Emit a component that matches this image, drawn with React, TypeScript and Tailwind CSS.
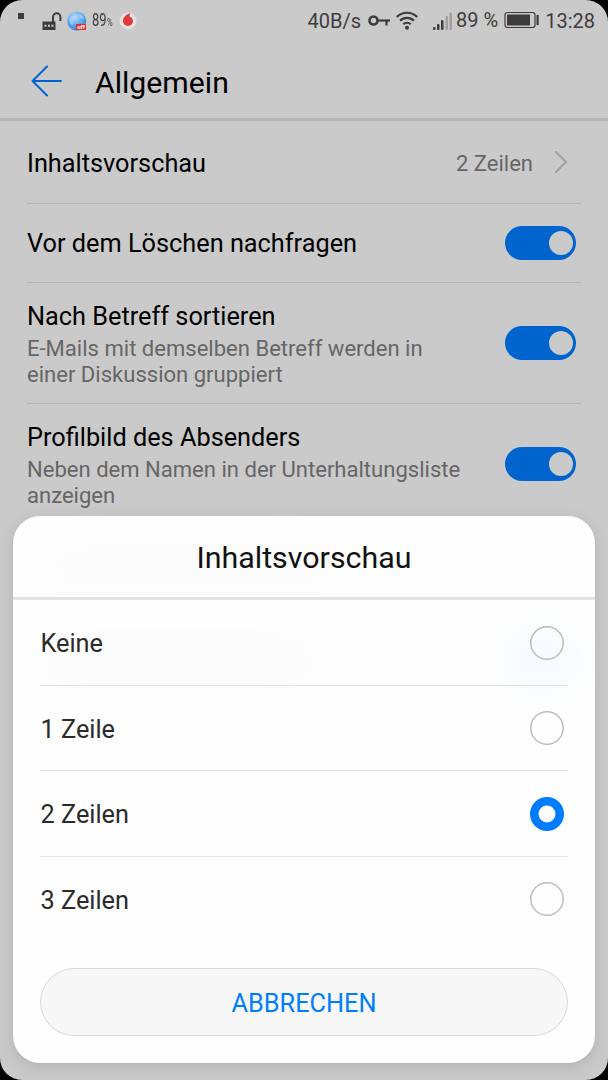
import { useState } from "react";

const options = ["Keine", "1 Zeile", "2 Zeilen", "3 Zeilen"];

const settings = [
  { title: "Vor dem Löschen nachfragen", height: "h-[79px]" },
  {
    title: "Nach Betreff sortieren",
    text: "E-Mails mit demselben Betreff werden in einer Diskussion gruppiert",
    height: "h-[121px]",
  },
  {
    title: "Profilbild des Absenders",
    text: "Neben dem Namen in der Unterhaltungsliste anzeigen",
    height: "h-[121px]",
  },
];

function StatusBar() {
  return (
    <div className="flex h-[41px] items-center justify-between pr-[13px] pl-[18px] text-[#3c3c3c]">
      <div className="flex items-center">
        <div className="mb-[9px] h-[6px] w-[6px] bg-[#3c3c3c]" />
        <svg className="ml-[17px]" width="22" height="20" viewBox="0 0 22 20" fill="none">
          <path d="M12 11V6a3.700 3.700 0 0 1 7.400 0v4" stroke="#3c3c3c" strokeWidth="2" />
          <rect x="1.500" y="10.500" width="13" height="8.500" fill="#3c3c3c" />
          <path d="M3.500 14.800h9.500" stroke="#cacaca" strokeWidth="2" strokeDasharray="2 1.500" />
        </svg>
        <svg className="ml-[4px]" width="20" height="20" viewBox="0 0 20 20">
          <defs>
            <radialGradient id="globe" cx="40%" cy="30%" r="70%">
              <stop offset="0" stopColor="#b9dcf7" />
              <stop offset="0.6" stopColor="#5fa9ee" />
              <stop offset="1" stopColor="#3b7fd0" />
            </radialGradient>
          </defs>
          <circle cx="9.700" cy="10" r="9.500" fill="url(#globe)" />
          <path d="M3 7c3-4 6-2 5 0s-3 2-2 5-2 2-3-1zM12 3c3 0 5 3 5 5l-4-1z" fill="#a9d3f5" opacity=".7" />
          <rect x="9" y="13" width="10" height="6" fill="#dd2f32" />
          <text x="14" y="18" textAnchor="middle" fontSize="6" fontWeight="700" fill="#fff">off</text>
        </svg>
        <div className="ml-[5px] flex w-[21px] items-baseline">
          <span className="origin-left scale-x-[0.720] text-[18px] leading-5">89</span>
          <span className="-ml-[5px] origin-left scale-x-[0.700] text-[11px]">%</span>
        </div>
        <svg className="ml-[6px]" width="18" height="18" viewBox="0 0 18 18">
          <circle cx="9" cy="9" r="8.500" fill="#e2e2e2" />
          <path d="M11.300 1.300C7.500 2 4 5.500 4 9a5 5 0 0 0 10 0c0-2.300-1.600-3.600-3.300-4.200-.1-1.500.1-2.500.6-3.500z" fill="#e2393b" />
        </svg>
      </div>
      <div className="flex items-center">
        <span className="text-[20px] leading-6">40B/s</span>
        <svg className="ml-[7px]" width="23" height="14" viewBox="0 0 23 14" fill="none" stroke="#3c3c3c">
          <circle cx="5.500" cy="6.500" r="4" strokeWidth="2.600" />
          <path d="M9.500 6.500H22" strokeWidth="2.200" />
          <path d="M18.500 6.500v5" strokeWidth="2.200" />
        </svg>
        <svg className="ml-[5px]" width="22" height="20" viewBox="0 0 22 20" fill="none" stroke="#3c3c3c" strokeWidth="2.200">
          <path d="M.8 6a14.400 14.400 0 0 1 20.400 0M4 9.800a9.900 9.900 0 0 1 14 0M7.300 13.300a5.200 5.200 0 0 1 7.400 0" />
          <circle cx="11" cy="16.800" r="2" fill="#3c3c3c" stroke="none" />
        </svg>
        <svg className="ml-[15px]" width="20" height="20" viewBox="0 0 20 20" fill="#3c3c3c">
          <rect x="0" y="16" width="2.500" height="3" rx="1" />
          <rect x="4" y="13" width="2.500" height="6" rx="1" />
          <rect x="8" y="9" width="2.500" height="10" rx="1" />
          <rect x="12.500" y="5" width="2.500" height="14" rx="1" fill="#a0a0a0" />
          <rect x="16.500" y="1.500" width="2.500" height="17.500" rx="1" fill="#a0a0a0" />
        </svg>
        <span className="ml-[3px] pb-[2px] text-[20px] leading-6">89 %</span>
        <svg className="mb-[1px] ml-[6px]" width="36" height="18" viewBox="0 0 36 18">
          <rect x="1" y="1.500" width="30" height="15" rx="2.500" fill="none" stroke="#3c3c3c" strokeWidth="1.200" />
          <rect x="3" y="3.500" width="23" height="11" fill="#3c3c3c" />
          <rect x="32.500" y="4" width="2.200" height="10" fill="#3c3c3c" />
        </svg>
        <span className="ml-[5px] text-[20px] leading-6">13:28</span>
      </div>
    </div>
  );
}

function Toggle() {
  return (
    <div className="flex h-[34px] w-[71px] shrink-0 items-center justify-end rounded-full bg-[#0064cf] pr-[3px]">
      <div className="h-6 w-6 rounded-full bg-[#cacaca]" />
    </div>
  );
}

function Radio({ checked }: { checked: boolean }) {
  return (
    <svg className="mt-[1px]" width="34" height="34" viewBox="0 0 34 34" fill="none">
      {checked ? (
        <circle cx="17" cy="17" r="12.750" stroke="#007dff" strokeWidth="8.500" />
      ) : (
        <circle cx="17" cy="17" r="16.200" stroke="#bebebe" strokeWidth="1.500" />
      )}
    </svg>
  );
}

export default function App() {
  const [selected, setSelected] = useState("2 Zeilen");

  return (
    <div className="h-[1080px] w-[608px] overflow-hidden bg-black font-['Roboto',sans-serif]">
      <div className="relative h-full overflow-hidden rounded-[22px] bg-[#cacaca]">
        <StatusBar />

        {/* Header */}
        <div className="flex h-[80px] items-center border-b-[3px] border-[#b4b4b4] pt-[2px] pl-[31px]">
          <svg width="32" height="32" viewBox="0 0 32 32" fill="none" stroke="#0064cf" strokeWidth="2" strokeLinecap="round" strokeLinejoin="round">
            <path d="M30 16H1.500M16 1.500 1.500 16 16 30.500" />
          </svg>
          <h1 className="ml-[32px] pt-[4px] text-[30.200px] leading-9 text-black">Allgemein</h1>
        </div>

        {/* Settings */}
        <div className="px-[27px]">
          <div className="flex h-[83px] items-center justify-between border-b border-[#b4b4b4]">
            <span className="pt-[3px] text-[25.300px] text-black">Inhaltsvorschau</span>
            <div className="flex items-center pr-[13px]">
              <span className="pt-[3px] text-[22px] text-[#666]">2 Zeilen</span>
              <svg className="ml-[21px]" width="14" height="22" viewBox="0 0 14 22" fill="none" stroke="#a0a0a0" strokeWidth="2" strokeLinecap="round">
                <path d="m2 1 10 10L2 21" />
              </svg>
            </div>
          </div>
          {settings.map((item) => (
            <div
              key={item.title}
              className={`flex items-center justify-between border-b border-[#b4b4b4] pr-[5px] ${item.height}`}
            >
              <div className="w-[440px] pt-[2px]">
                <p className="text-[25.300px] leading-[32px] text-black">{item.title}</p>
                {item.text && (
                  <p className="mt-[3px] -mb-[1px] text-[22.050px] leading-[26px] text-[#666]">{item.text}</p>
                )}
              </div>
              <Toggle />
            </div>
          ))}
        </div>

        {/* Bottom dialog */}
        <div className="absolute bottom-[17px] left-[13px] h-[547px] w-[582px] rounded-[27px] bg-[#fefefe] shadow-[0_4px_16px_rgba(0,0,0,0.12)]">
          <div className="absolute top-[25px] left-[35px] h-[50px] w-[280px] rounded-full bg-[#fbfbfb] blur-[14px]" />
          <div className="absolute top-[125px] left-[35px] h-[42px] w-[260px] rounded-full bg-[#fafafa] blur-[14px]" />
          <div className="absolute top-[113px] left-[490px] h-[60px] w-[75px] rounded-full bg-[#f5faff] blur-[14px]" />
          <div className="relative flex h-[84px] items-center justify-center border-b-[3px] border-[#e3e3e3] pt-[3px]">
            <h2 className="text-[30.400px] leading-9 text-[#111]">Inhaltsvorschau</h2>
          </div>
          <div className="relative px-[27px]">
            {options.map((option) => (
              <button
                key={option}
                onClick={() => setSelected(option)}
                className="flex h-[85.500px] w-full items-center justify-between border-b border-[#e3e3e3] pr-[4px] last:border-transparent"
              >
                <span className="pt-[4px] pl-[0.500px] text-[25.300px] text-[#2b2b2b]">{option}</span>
                <Radio checked={option === selected} />
              </button>
            ))}
          </div>
          <button className="relative mx-[27px] mt-[26px] h-[68px] w-[528px] rounded-full border border-[#dadada] bg-[#f7f7f7] pt-[3px] text-[25.300px] text-[#007dff]">
            ABBRECHEN
          </button>
        </div>
      </div>
    </div>
  );
}
